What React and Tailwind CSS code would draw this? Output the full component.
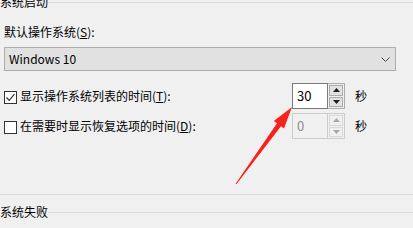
import React from 'react';

// 微调框（上下箭头）
function Spinner({ value, disabled }) {
  const textBorder = disabled ? 'border-[#cccccc] bg-[#f0f0f0] text-[#8c8c8c]' : 'border-[#7a7a7a] bg-white text-black';
  const btn = disabled ? 'border-[#d9d9d9] bg-[#f0f0f0]' : 'border-[#adadad] bg-[#e1e1e1]';
  const tri = disabled ? '#a8a8a8' : '#1f1f1f';
  return (
    <div className="flex h-[26px] w-[53px]">
      <div className={`w-[36px] h-full border flex items-center pl-[4px] text-[13px] ${textBorder}`}>
        {value}
      </div>
      <div className={`w-[17px] h-full border border-l-0 flex flex-col p-[1px] gap-[1px] ${disabled ? 'border-[#cccccc]' : 'border-[#adadad]'}`}>
        <div className={`flex-1 border flex items-center justify-center ${btn}`}>
          <svg width="7" height="4" viewBox="0 0 7 4"><polygon points="3.5,0 7,4 0,4" fill={tri} /></svg>
        </div>
        <div className={`flex-1 border flex items-center justify-center ${btn}`}>
          <svg width="7" height="4" viewBox="0 0 7 4"><polygon points="0,0 7,0 3.5,4" fill={tri} /></svg>
        </div>
      </div>
    </div>
  );
}

function Checkbox({ checked }) {
  return (
    <div className="w-[13px] h-[13px] border border-[#333333] bg-white flex items-center justify-center mt-[3px]">
      {checked && (
        <svg width="11" height="11" viewBox="0 0 11 11">
          <path d="M1.5 5.5 L4.2 8.3 L9.5 2.2" stroke="#333333" strokeWidth="1.2" fill="none" />
        </svg>
      )}
    </div>
  );
}

export default function App() {
  return (
    <div
      className="relative w-[413px] h-[228px] overflow-hidden bg-[#f0f0f0] text-[12px] text-black"
      style={{ fontFamily: '"Noto Sans CJK SC", "Noto Sans", sans-serif' }}
    >
      {/* 系统启动 */}
      <div className="flex items-center h-[12px] -mt-[4px]">
        <span className="leading-[12px]">系统启动</span>
        <div className="flex-1 h-px bg-[#dcdcdc]"></div>
      </div>

      <div className="pl-[4px]">
        <div className="mt-[16px] h-[16px] leading-[16px]">
          默认操作系统(<u>S</u>):
        </div>

        <div className="mt-[7px] h-[24px] w-[392px] border border-[#adadad] bg-[#e1e1e1] flex items-center justify-between pl-[4px] pr-[5px]">
          <span>Windows 10</span>
          <svg width="9" height="5" viewBox="0 0 9 5">
            <path d="M0.5 0.5 L4.5 4.5 L8.5 0.5" stroke="#444444" strokeWidth="1" fill="none" />
          </svg>
        </div>

        <div className="mt-[12px] flex items-center h-[26px]">
          <div className="w-[288px] flex items-center gap-[3px]">
            <Checkbox checked />
            <span>显示操作系统列表的时间(<u>T</u>):</span>
          </div>
          <Spinner value="30" />
          <span className="ml-[10px]">秒</span>
        </div>

        <div className="mt-[4px] flex items-center h-[26px]">
          <div className="w-[288px] flex items-center gap-[3px]">
            <Checkbox />
            <span>在需要时显示恢复选项的时间(<u>D</u>):</span>
          </div>
          <Spinner value="0" disabled />
          <span className="ml-[10px]">秒</span>
        </div>
      </div>

      <div className="mt-[55px] h-px bg-[#dcdcdc]"></div>

      {/* 系统失败 */}
      <div className="mt-[10px] flex items-center h-[14px]">
        <span className="leading-[14px]">系统失败</span>
        <div className="flex-1 h-px bg-[#dcdcdc]"></div>
      </div>

      {/* 红色箭头标注 */}
      <svg className="absolute left-0 top-0 pointer-events-none" width="413" height="228" viewBox="0 0 413 228">
        <polygon
          points="292,107 284,128.5 281,126.3 236.4,184.3 235.6,183.7 277,123.3 273.8,121"
          fill="#f5231b"
        />
      </svg>
    </div>
  );
}
